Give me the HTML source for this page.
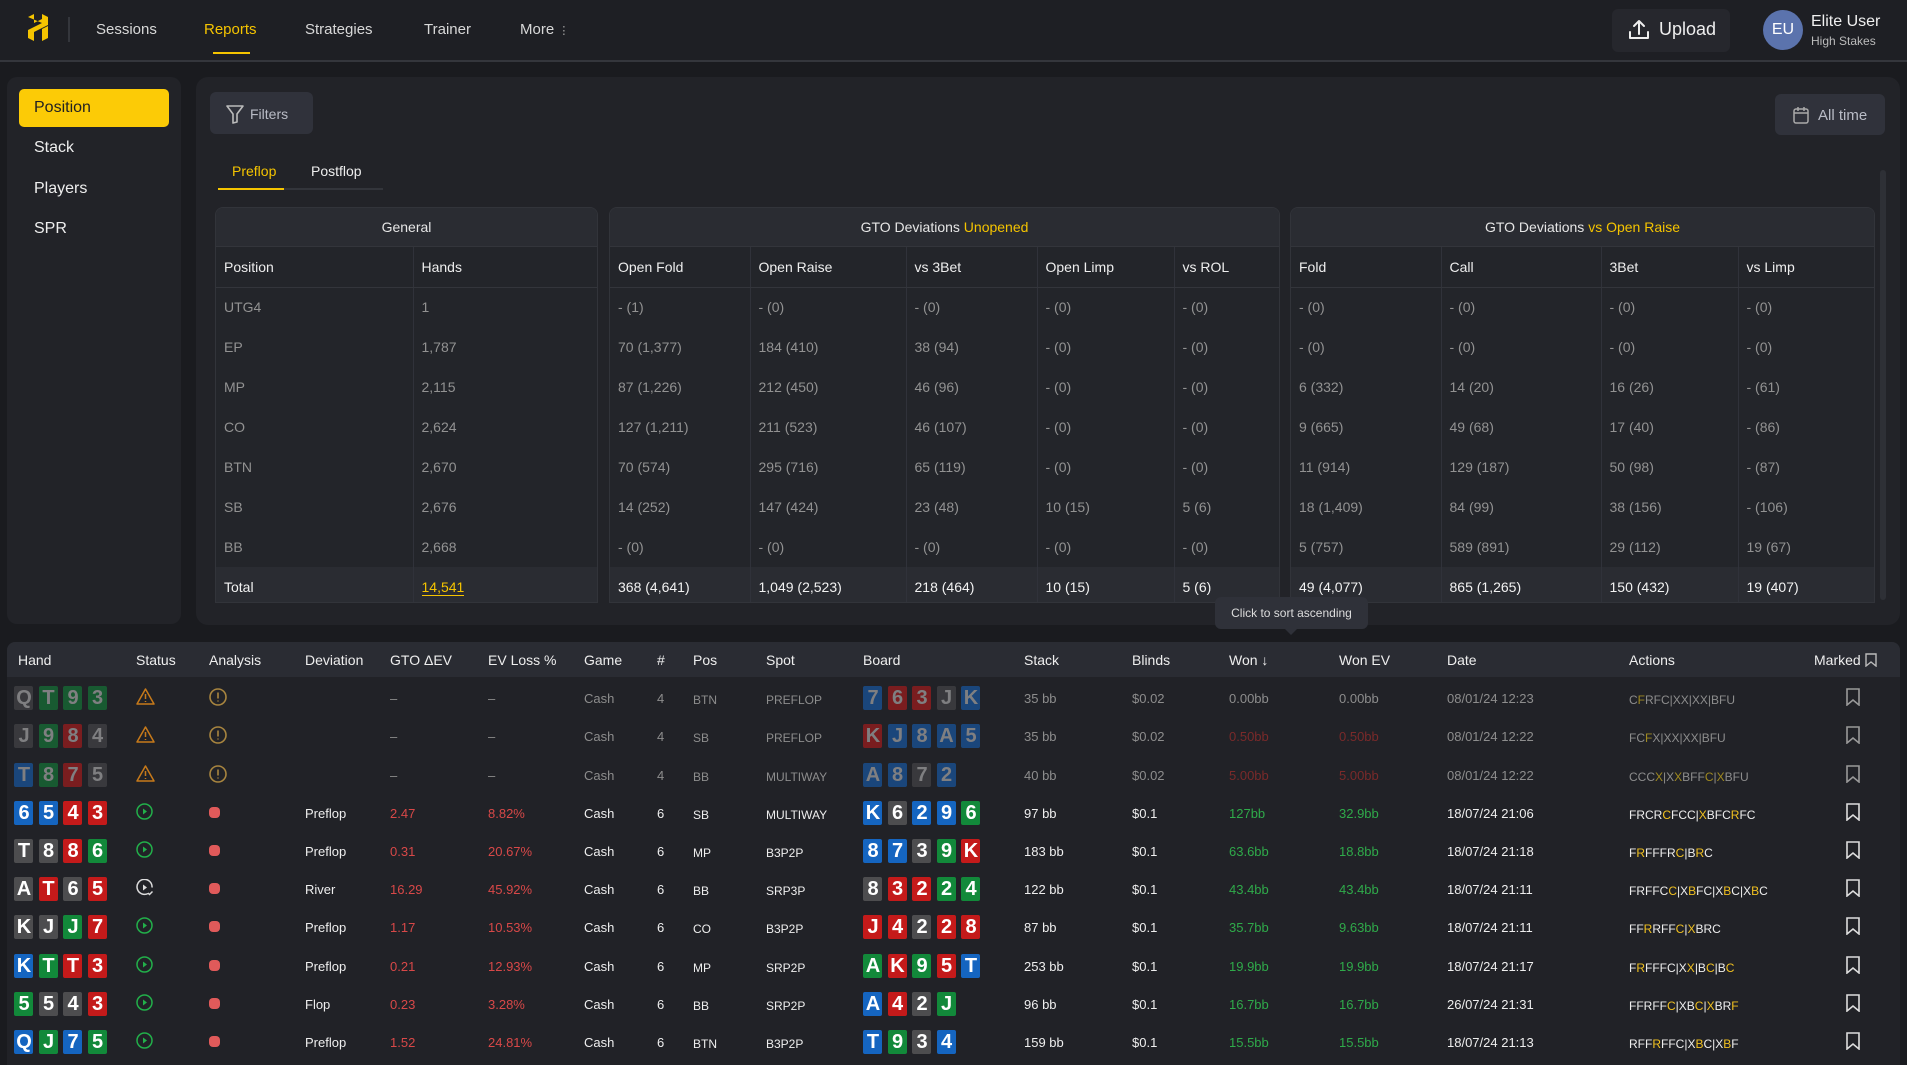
<!DOCTYPE html>
<html><head><meta charset="utf-8">
<style>
*{box-sizing:border-box;margin:0;padding:0}
body{width:1907px;height:1065px;overflow:hidden;background:#1a1b1f;font-family:"Liberation Sans",sans-serif;color:#ddd;position:relative}
.abs{position:absolute}
#hdr{left:0;top:0;width:1907px;height:62px;background:#1e1f24;border-bottom:2px solid #34363c}
.nav{position:absolute;top:21px;font-size:15px;color:#d8d8d8}
#side{left:7px;top:77px;width:174px;height:547px;background:#222328;border-radius:10px}
.si{position:absolute;left:27px;font-size:16px;color:#eee}
#main{left:196px;top:77px;width:1704px;height:548px;background:#222328;border-radius:12px}
.btn{position:absolute;background:#30323b;border-radius:6px;color:#b9bcc6;font-size:15px}
.grp{position:absolute;top:207px;height:396px;background:#23252a;border:1px solid #32343a;border-radius:8px 8px 0 0;overflow:hidden}
.gh{height:39px;background:#2a2c32;text-align:center;font-size:14px;line-height:39px;color:#e6e6e6;border-bottom:1px solid #33353b}
.gt{border-collapse:collapse;table-layout:fixed}
.gt td{height:40px;padding-left:8px;font-size:14px;color:#929292;border-right:1px solid #30323a;white-space:nowrap}
.gt tr.h td{color:#eee;border-bottom:1px solid #33353b;height:40px}
.gt tr.t td{background:#2a2c32;color:#f2f2f2}
.gt td:last-child{border-right:none}
.y{color:#f5c400}
#bt{left:7px;top:642px;width:1893px;height:423px;background:#212227;border-radius:8px 8px 0 0}
.row{position:absolute;left:0;width:1893px;display:flex;align-items:center;font-size:13px;color:#eee;white-space:nowrap}
.row>div{flex:none}
.hr{top:0;height:35px;background:#2a2c33;border-radius:8px 8px 0 0;font-size:14px;padding-left:11px}
.c{display:inline-block;width:19px;height:24px;border-radius:2px;font:bold 20px/24px "Liberation Sans",sans-serif;color:#fff;text-align:center;margin-right:5.5px;vertical-align:middle;overflow:hidden}
.c{letter-spacing:-1px}
.b{background:#1565c0}.r{background:#c41a1a}.g{background:#12893a}.k{background:#4d4d4f}
.dim .c{opacity:.55;color:#ccc}
.dim{color:#8d8d8d}
.red{color:#d84848}.grn{color:#2faa4a}.dred{color:#7a2a2a}
.sm{font-size:12px;padding-top:4px}
.dot{width:11px;height:11px;border-radius:4px;background:#e05a5a;display:inline-block}
.ac span{color:#f0c020}
.dim .ac span{color:#a08a20}
.bm{margin-left:32px}
</style></head><body>

<div id="hdr" class="abs">
  <svg class="abs" style="left:27px;top:14px" width="22" height="27" viewBox="0 0 22 27"><path d="M1 3 L7 0 L7 9 L15 5 L15 0 L21 3 L21 11 L7 18 L7 27 L1 24 L1 16 L15 9 Z" fill="#f5c400"/><path d="M15 15 L21 12 L21 24 L15 27 Z" fill="#f5c400"/></svg>
  <div class="abs" style="left:68px;top:17px;width:2px;height:25px;background:#34363c"></div>
  <div class="nav" style="left:96px">Sessions</div>
  <div class="nav" style="left:204px;color:#f5c400">Reports</div>
  <div class="abs" style="left:213px;top:52px;width:37px;height:2px;background:#f5c400"></div>
  <div class="nav" style="left:305px">Strategies</div>
  <div class="nav" style="left:424px">Trainer</div>
  <div class="nav" style="left:520px">More <span style="font-size:11px;color:#aaa">&#8942;</span></div>
  <div class="abs" style="left:1612px;top:9px;width:118px;height:43px;background:#26272d;border-radius:6px"></div>
  <svg class="abs" style="left:1628px;top:19px" width="22" height="22" viewBox="0 0 22 22" fill="none" stroke="#eee" stroke-width="2" stroke-linecap="round" stroke-linejoin="round"><path d="M2 13v6h18v-6"/><path d="M11 15V2M6 7l5-5 5 5"/></svg>
  <div class="abs" style="left:1659px;top:19px;font-size:18px;color:#eee">Upload</div>
  <div class="abs" style="left:1763px;top:10px;width:40px;height:40px;border-radius:50%;background:#5b73ad;color:#fff;font-size:16px;line-height:40px;text-align:center">EU</div>
  <div class="abs" style="left:1811px;top:13px;font-size:16px;color:#f0f0f0">Elite User</div>
  <div class="abs" style="left:1811px;top:34px;font-size:12px;color:#bbb">High Stakes</div>
</div>

<div id="side" class="abs">
  <div class="abs" style="left:12px;top:12px;width:150px;height:38px;background:#fccb06;border-radius:5px"></div>
  <div class="si" style="top:22px;color:#222">Position</div>
  <div class="si" style="top:62px">Stack</div>
  <div class="si" style="top:103px">Players</div>
  <div class="si" style="top:143px">SPR</div>
</div>

<div id="main" class="abs">
  <div class="btn" style="left:14px;top:15px;width:103px;height:42px"></div>
  <svg class="abs" style="left:30px;top:28px" width="18" height="19" viewBox="0 0 18 19" fill="none" stroke="#bbb" stroke-width="1.6" stroke-linejoin="round"><path d="M1 1h16l-6 8v8l-4 1V9z"/></svg>
  <div class="abs" style="left:54px;top:29px;font-size:14px;color:#b9bcc6">Filters</div>
  <div class="btn" style="left:1579px;top:17px;width:110px;height:41px"></div>
  <svg class="abs" style="left:1597px;top:29px" width="16" height="18" viewBox="0 0 16 18" fill="none" stroke="#aaa" stroke-width="1.5"><rect x="1" y="3" width="14" height="14" rx="2"/><path d="M1 7h14M5 1v4M11 1v4"/></svg>
  <div class="abs" style="left:1622px;top:30px;font-size:15px;color:#b9bcc6">All time</div>
  <div class="abs" style="left:22px;top:111px;width:165px;height:2px;background:#33353b"></div>
  <div class="abs" style="left:22px;top:111px;width:66px;height:2px;background:#f5c400"></div>
  <div class="abs" style="left:36px;top:86px;font-size:14px;color:#f5c400">Preflop</div>
  <div class="abs" style="left:115px;top:86px;font-size:14px;color:#eee">Postflop</div>
  <div class="abs" style="left:1684px;top:93px;width:6px;height:430px;background:#2e3036;border-radius:3px"></div>
</div>

<div class="grp" style="left:215px;width:383px">
  <div class="gh">General</div>
  <table class="gt" style="width:381px"><colgroup><col style="width:197px"><col style="width:184px"></colgroup>
  <tr class="h"><td>Position</td><td>Hands</td></tr>
  <tr><td>UTG4</td><td>1</td></tr>
  <tr><td>EP</td><td>1,787</td></tr>
  <tr><td>MP</td><td>2,115</td></tr>
  <tr><td>CO</td><td>2,624</td></tr>
  <tr><td>BTN</td><td>2,670</td></tr>
  <tr><td>SB</td><td>2,676</td></tr>
  <tr><td>BB</td><td>2,668</td></tr>
  <tr class="t"><td>Total</td><td><span class="y" style="border-bottom:1px solid #f5c400">14,541</span></td></tr>
  </table>
</div>
<div class="grp" style="left:609px;width:671px">
  <div class="gh">GTO Deviations <span class="y">Unopened</span></div>
  <table class="gt" style="width:669px"><colgroup><col style="width:140px"><col style="width:156px"><col style="width:131px"><col style="width:137px"><col style="width:105px"></colgroup>
  <tr class="h"><td>Open Fold</td><td>Open Raise</td><td>vs 3Bet</td><td>Open Limp</td><td>vs ROL</td></tr>
  <tr><td>- (1)</td><td>- (0)</td><td>- (0)</td><td>- (0)</td><td>- (0)</td></tr>
  <tr><td>70 (1,377)</td><td>184 (410)</td><td>38 (94)</td><td>- (0)</td><td>- (0)</td></tr>
  <tr><td>87 (1,226)</td><td>212 (450)</td><td>46 (96)</td><td>- (0)</td><td>- (0)</td></tr>
  <tr><td>127 (1,211)</td><td>211 (523)</td><td>46 (107)</td><td>- (0)</td><td>- (0)</td></tr>
  <tr><td>70 (574)</td><td>295 (716)</td><td>65 (119)</td><td>- (0)</td><td>- (0)</td></tr>
  <tr><td>14 (252)</td><td>147 (424)</td><td>23 (48)</td><td>10 (15)</td><td>5 (6)</td></tr>
  <tr><td>- (0)</td><td>- (0)</td><td>- (0)</td><td>- (0)</td><td>- (0)</td></tr>
  <tr class="t"><td>368 (4,641)</td><td>1,049 (2,523)</td><td>218 (464)</td><td>10 (15)</td><td>5 (6)</td></tr>
  </table>
</div>
<div class="grp" style="left:1290px;width:585px">
  <div class="gh">GTO Deviations <span class="y">vs Open Raise</span></div>
  <table class="gt" style="width:583px"><colgroup><col style="width:150px"><col style="width:160px"><col style="width:137px"><col style="width:136px"></colgroup>
  <tr class="h"><td>Fold</td><td>Call</td><td>3Bet</td><td>vs Limp</td></tr>
  <tr><td>- (0)</td><td>- (0)</td><td>- (0)</td><td>- (0)</td></tr>
  <tr><td>- (0)</td><td>- (0)</td><td>- (0)</td><td>- (0)</td></tr>
  <tr><td>6 (332)</td><td>14 (20)</td><td>16 (26)</td><td>- (61)</td></tr>
  <tr><td>9 (665)</td><td>49 (68)</td><td>17 (40)</td><td>- (86)</td></tr>
  <tr><td>11 (914)</td><td>129 (187)</td><td>50 (98)</td><td>- (87)</td></tr>
  <tr><td>18 (1,409)</td><td>84 (99)</td><td>38 (156)</td><td>- (106)</td></tr>
  <tr><td>5 (757)</td><td>589 (891)</td><td>29 (112)</td><td>19 (67)</td></tr>
  <tr class="t"><td>49 (4,077)</td><td>865 (1,265)</td><td>150 (432)</td><td>19 (407)</td></tr>
  </table>
</div>

<div id="bt" class="abs">
  <div class="row hr">
    <div style="width:118px">Hand</div><div style="width:73px">Status</div><div style="width:96px">Analysis</div><div style="width:85px">Deviation</div><div style="width:98px">GTO ΔEV</div><div style="width:96px">EV Loss %</div><div style="width:73px">Game</div><div style="width:36px">#</div><div style="width:73px">Pos</div><div style="width:97px">Spot</div><div style="width:161px">Board</div><div style="width:108px">Stack</div><div style="width:97px">Blinds</div><div style="width:110px">Won &#8595;</div><div style="width:108px">Won EV</div><div style="width:182px">Date</div><div style="width:185px">Actions</div><div>Marked <svg width="12" height="14" viewBox="0 0 12 14" fill="none" stroke="#bbb" stroke-width="1.4" style="vertical-align:-2px"><path d="M1 1h10v12l-5-4-5 4z"/></svg></div>
  </div>
</div>

<div id="rows" class="abs" style="left:7px;top:679px">
<div class="row dim" style="top:0;height:38px;padding-left:7px">
<div style="width:122px"><span class="c k">Q</span><span class="c g">T</span><span class="c g">9</span><span class="c g">3</span></div>
<div style="width:73px"><svg width="19" height="17" viewBox="0 0 19 17" fill="none" stroke="#c77a1a" stroke-width="1.5" stroke-linejoin="round"><path d="M9.5 1L18 16H1z"/><path d="M9.5 6v5M9.5 13v1"/></svg></div>
<div style="width:96px"><svg width="18" height="18" viewBox="0 0 18 18" fill="none" stroke="#a8853f" stroke-width="1.6"><circle cx="9" cy="9" r="8"/><path d="M9 4.5v6M9 12.5v1"/></svg></div>
<div style="width:85px"></div><div style="width:98px">–</div><div style="width:96px">–</div><div style="width:73px">Cash</div><div style="width:36px">4</div><div style="width:73px" class="sm">BTN</div><div style="width:97px" class="sm">PREFLOP</div>
<div style="width:161px"><span class="c b">7</span><span class="c r">6</span><span class="c r">3</span><span class="c k">J</span><span class="c b">K</span></div>
<div style="width:108px">35 bb</div><div style="width:97px">$0.02</div><div style="width:110px">0.00bb</div><div style="width:108px">0.00bb</div><div style="width:182px">08/01/24 12:23</div><div style="width:185px" class="ac sm">C<span>F</span>RFC|XX|XX|BFU</div>
<div class="bm"><svg width="14" height="18" viewBox="0 0 14 18" fill="none" stroke="#999" stroke-width="1.6"><path d="M1 1h12v16l-6-5-6 5z"/></svg></div>
</div>

<div class="row dim" style="top:38px;height:38px;padding-left:7px">
<div style="width:122px"><span class="c k">J</span><span class="c g">9</span><span class="c r">8</span><span class="c k">4</span></div>
<div style="width:73px"><svg width="19" height="17" viewBox="0 0 19 17" fill="none" stroke="#c77a1a" stroke-width="1.5" stroke-linejoin="round"><path d="M9.5 1L18 16H1z"/><path d="M9.5 6v5M9.5 13v1"/></svg></div>
<div style="width:96px"><svg width="18" height="18" viewBox="0 0 18 18" fill="none" stroke="#a8853f" stroke-width="1.6"><circle cx="9" cy="9" r="8"/><path d="M9 4.5v6M9 12.5v1"/></svg></div>
<div style="width:85px"></div><div style="width:98px">–</div><div style="width:96px">–</div><div style="width:73px">Cash</div><div style="width:36px">4</div><div style="width:73px" class="sm">SB</div><div style="width:97px" class="sm">PREFLOP</div>
<div style="width:161px"><span class="c r">K</span><span class="c b">J</span><span class="c b">8</span><span class="c b">A</span><span class="c b">5</span></div>
<div style="width:108px">35 bb</div><div style="width:97px">$0.02</div><div style="width:110px" class="dred">0.50bb</div><div style="width:108px" class="dred">0.50bb</div><div style="width:182px">08/01/24 12:22</div><div style="width:185px" class="ac sm">FC<span>F</span>X|XX|XX|BFU</div>
<div class="bm"><svg width="14" height="18" viewBox="0 0 14 18" fill="none" stroke="#999" stroke-width="1.6"><path d="M1 1h12v16l-6-5-6 5z"/></svg></div>
</div>

<div class="row dim" style="top:77px;height:38px;padding-left:7px">
<div style="width:122px"><span class="c b">T</span><span class="c g">8</span><span class="c r">7</span><span class="c k">5</span></div>
<div style="width:73px"><svg width="19" height="17" viewBox="0 0 19 17" fill="none" stroke="#c77a1a" stroke-width="1.5" stroke-linejoin="round"><path d="M9.5 1L18 16H1z"/><path d="M9.5 6v5M9.5 13v1"/></svg></div>
<div style="width:96px"><svg width="18" height="18" viewBox="0 0 18 18" fill="none" stroke="#a8853f" stroke-width="1.6"><circle cx="9" cy="9" r="8"/><path d="M9 4.5v6M9 12.5v1"/></svg></div>
<div style="width:85px"></div><div style="width:98px">–</div><div style="width:96px">–</div><div style="width:73px">Cash</div><div style="width:36px">4</div><div style="width:73px" class="sm">BB</div><div style="width:97px" class="sm">MULTIWAY</div>
<div style="width:161px"><span class="c b">A</span><span class="c b">8</span><span class="c k">7</span><span class="c b">2</span></div>
<div style="width:108px">40 bb</div><div style="width:97px">$0.02</div><div style="width:110px" class="dred">5.00bb</div><div style="width:108px" class="dred">5.00bb</div><div style="width:182px">08/01/24 12:22</div><div style="width:185px" class="ac sm">CCC<span>X</span>|X<span>X</span>BFF<span>C</span>|<span>X</span>BFU</div>
<div class="bm"><svg width="14" height="18" viewBox="0 0 14 18" fill="none" stroke="#999" stroke-width="1.6"><path d="M1 1h12v16l-6-5-6 5z"/></svg></div>
</div>

<div class="row" style="top:115px;height:38px;padding-left:7px">
<div style="width:122px"><span class="c b">6</span><span class="c b">5</span><span class="c r">4</span><span class="c r">3</span></div>
<div style="width:73px"><svg width="17" height="17" viewBox="0 0 17 17"><circle cx="8.5" cy="8.5" r="7.5" fill="none" stroke="#22b04a" stroke-width="1.5"/><path d="M7 5.5l4 3-4 3z" fill="#22b04a"/></svg></div>
<div style="width:96px"><span class="dot"></span></div>
<div style="width:85px">Preflop</div><div style="width:98px" class="red">2.47</div><div style="width:96px" class="red">8.82%</div><div style="width:73px">Cash</div><div style="width:36px">6</div><div style="width:73px" class="sm">SB</div><div style="width:97px" class="sm">MULTIWAY</div>
<div style="width:161px"><span class="c b">K</span><span class="c k">6</span><span class="c b">2</span><span class="c b">9</span><span class="c g">6</span></div>
<div style="width:108px">97 bb</div><div style="width:97px">$0.1</div><div style="width:110px" class="grn">127bb</div><div style="width:108px" class="grn">32.9bb</div><div style="width:182px">18/07/24 21:06</div><div style="width:185px" class="ac sm">FRCR<span>C</span>FCC|<span>X</span>BFC<span>R</span>FC</div>
<div class="bm"><svg width="14" height="18" viewBox="0 0 14 18" fill="none" stroke="#ddd" stroke-width="1.6"><path d="M1 1h12v16l-6-5-6 5z"/></svg></div>
</div>

<div class="row" style="top:153px;height:38px;padding-left:7px">
<div style="width:122px"><span class="c k">T</span><span class="c k">8</span><span class="c r">8</span><span class="c g">6</span></div>
<div style="width:73px"><svg width="17" height="17" viewBox="0 0 17 17"><circle cx="8.5" cy="8.5" r="7.5" fill="none" stroke="#22b04a" stroke-width="1.5"/><path d="M7 5.5l4 3-4 3z" fill="#22b04a"/></svg></div>
<div style="width:96px"><span class="dot"></span></div>
<div style="width:85px">Preflop</div><div style="width:98px" class="red">0.31</div><div style="width:96px" class="red">20.67%</div><div style="width:73px">Cash</div><div style="width:36px">6</div><div style="width:73px" class="sm">MP</div><div style="width:97px" class="sm">B3P2P</div>
<div style="width:161px"><span class="c b">8</span><span class="c b">7</span><span class="c k">3</span><span class="c g">9</span><span class="c r">K</span></div>
<div style="width:108px">183 bb</div><div style="width:97px">$0.1</div><div style="width:110px" class="grn">63.6bb</div><div style="width:108px" class="grn">18.8bb</div><div style="width:182px">18/07/24 21:18</div><div style="width:185px" class="ac sm">F<span>R</span>FFFR<span>C</span>|B<span>R</span>C</div>
<div class="bm"><svg width="14" height="18" viewBox="0 0 14 18" fill="none" stroke="#ddd" stroke-width="1.6"><path d="M1 1h12v16l-6-5-6 5z"/></svg></div>
</div>

<div class="row" style="top:191px;height:38px;padding-left:7px">
<div style="width:122px"><span class="c k">A</span><span class="c r">T</span><span class="c k">6</span><span class="c r">5</span></div>
<div style="width:73px"><svg width="17" height="17" viewBox="0 0 17 17" fill="none" stroke="#ddd" stroke-width="1.5"><path d="M12 14.5A7.5 7.5 0 1 1 16 8.5"/><path d="M7 5.5l4 3-4 3z" fill="#ddd" stroke="none"/><path d="M12 14l1.5 1.5 3-3"/></svg></div>
<div style="width:96px"><span class="dot"></span></div>
<div style="width:85px">River</div><div style="width:98px" class="red">16.29</div><div style="width:96px" class="red">45.92%</div><div style="width:73px">Cash</div><div style="width:36px">6</div><div style="width:73px" class="sm">BB</div><div style="width:97px" class="sm">SRP3P</div>
<div style="width:161px"><span class="c k">8</span><span class="c r">3</span><span class="c r">2</span><span class="c g">2</span><span class="c g">4</span></div>
<div style="width:108px">122 bb</div><div style="width:97px">$0.1</div><div style="width:110px" class="grn">43.4bb</div><div style="width:108px" class="grn">43.4bb</div><div style="width:182px">18/07/24 21:11</div><div style="width:185px" class="ac sm">FRFFC<span>C</span>|X<span>B</span>FC|X<span>B</span>C|X<span>B</span>C</div>
<div class="bm"><svg width="14" height="18" viewBox="0 0 14 18" fill="none" stroke="#ddd" stroke-width="1.6"><path d="M1 1h12v16l-6-5-6 5z"/></svg></div>
</div>

<div class="row" style="top:229px;height:38px;padding-left:7px">
<div style="width:122px"><span class="c k">K</span><span class="c k">J</span><span class="c g">J</span><span class="c r">7</span></div>
<div style="width:73px"><svg width="17" height="17" viewBox="0 0 17 17"><circle cx="8.5" cy="8.5" r="7.5" fill="none" stroke="#22b04a" stroke-width="1.5"/><path d="M7 5.5l4 3-4 3z" fill="#22b04a"/></svg></div>
<div style="width:96px"><span class="dot"></span></div>
<div style="width:85px">Preflop</div><div style="width:98px" class="red">1.17</div><div style="width:96px" class="red">10.53%</div><div style="width:73px">Cash</div><div style="width:36px">6</div><div style="width:73px" class="sm">CO</div><div style="width:97px" class="sm">B3P2P</div>
<div style="width:161px"><span class="c r">J</span><span class="c r">4</span><span class="c k">2</span><span class="c r">2</span><span class="c r">8</span></div>
<div style="width:108px">87 bb</div><div style="width:97px">$0.1</div><div style="width:110px" class="grn">35.7bb</div><div style="width:108px" class="grn">9.63bb</div><div style="width:182px">18/07/24 21:11</div><div style="width:185px" class="ac sm">FF<span>R</span>RFF<span>C</span>|<span>X</span>BRC</div>
<div class="bm"><svg width="14" height="18" viewBox="0 0 14 18" fill="none" stroke="#ddd" stroke-width="1.6"><path d="M1 1h12v16l-6-5-6 5z"/></svg></div>
</div>

<div class="row" style="top:268px;height:38px;padding-left:7px">
<div style="width:122px"><span class="c b">K</span><span class="c g">T</span><span class="c r">T</span><span class="c r">3</span></div>
<div style="width:73px"><svg width="17" height="17" viewBox="0 0 17 17"><circle cx="8.5" cy="8.5" r="7.5" fill="none" stroke="#22b04a" stroke-width="1.5"/><path d="M7 5.5l4 3-4 3z" fill="#22b04a"/></svg></div>
<div style="width:96px"><span class="dot"></span></div>
<div style="width:85px">Preflop</div><div style="width:98px" class="red">0.21</div><div style="width:96px" class="red">12.93%</div><div style="width:73px">Cash</div><div style="width:36px">6</div><div style="width:73px" class="sm">MP</div><div style="width:97px" class="sm">SRP2P</div>
<div style="width:161px"><span class="c g">A</span><span class="c r">K</span><span class="c g">9</span><span class="c r">5</span><span class="c b">T</span></div>
<div style="width:108px">253 bb</div><div style="width:97px">$0.1</div><div style="width:110px" class="grn">19.9bb</div><div style="width:108px" class="grn">19.9bb</div><div style="width:182px">18/07/24 21:17</div><div style="width:185px" class="ac sm">F<span>R</span>FFFC|X<span>X</span>|B<span>C</span>|B<span>C</span></div>
<div class="bm"><svg width="14" height="18" viewBox="0 0 14 18" fill="none" stroke="#ddd" stroke-width="1.6"><path d="M1 1h12v16l-6-5-6 5z"/></svg></div>
</div>

<div class="row" style="top:306px;height:38px;padding-left:7px">
<div style="width:122px"><span class="c g">5</span><span class="c k">5</span><span class="c k">4</span><span class="c r">3</span></div>
<div style="width:73px"><svg width="17" height="17" viewBox="0 0 17 17"><circle cx="8.5" cy="8.5" r="7.5" fill="none" stroke="#22b04a" stroke-width="1.5"/><path d="M7 5.5l4 3-4 3z" fill="#22b04a"/></svg></div>
<div style="width:96px"><span class="dot"></span></div>
<div style="width:85px">Flop</div><div style="width:98px" class="red">0.23</div><div style="width:96px" class="red">3.28%</div><div style="width:73px">Cash</div><div style="width:36px">6</div><div style="width:73px" class="sm">BB</div><div style="width:97px" class="sm">SRP2P</div>
<div style="width:161px"><span class="c b">A</span><span class="c r">4</span><span class="c k">2</span><span class="c g">J</span></div>
<div style="width:108px">96 bb</div><div style="width:97px">$0.1</div><div style="width:110px" class="grn">16.7bb</div><div style="width:108px" class="grn">16.7bb</div><div style="width:182px">26/07/24 21:31</div><div style="width:185px" class="ac sm">FFRFF<span>C</span>|XB<span>C</span>|<span>X</span>BR<span>F</span></div>
<div class="bm"><svg width="14" height="18" viewBox="0 0 14 18" fill="none" stroke="#ddd" stroke-width="1.6"><path d="M1 1h12v16l-6-5-6 5z"/></svg></div>
</div>

<div class="row" style="top:344px;height:38px;padding-left:7px">
<div style="width:122px"><span class="c b">Q</span><span class="c g">J</span><span class="c b">7</span><span class="c g">5</span></div>
<div style="width:73px"><svg width="17" height="17" viewBox="0 0 17 17"><circle cx="8.5" cy="8.5" r="7.5" fill="none" stroke="#22b04a" stroke-width="1.5"/><path d="M7 5.5l4 3-4 3z" fill="#22b04a"/></svg></div>
<div style="width:96px"><span class="dot"></span></div>
<div style="width:85px">Preflop</div><div style="width:98px" class="red">1.52</div><div style="width:96px" class="red">24.81%</div><div style="width:73px">Cash</div><div style="width:36px">6</div><div style="width:73px" class="sm">BTN</div><div style="width:97px" class="sm">B3P2P</div>
<div style="width:161px"><span class="c b">T</span><span class="c g">9</span><span class="c k">3</span><span class="c b">4</span></div>
<div style="width:108px">159 bb</div><div style="width:97px">$0.1</div><div style="width:110px" class="grn">15.5bb</div><div style="width:108px" class="grn">15.5bb</div><div style="width:182px">18/07/24 21:13</div><div style="width:185px" class="ac sm">RFF<span>R</span>FFC|X<span>B</span>C|X<span>B</span>F</div>
<div class="bm"><svg width="14" height="18" viewBox="0 0 14 18" fill="none" stroke="#ddd" stroke-width="1.6"><path d="M1 1h12v16l-6-5-6 5z"/></svg></div>
</div>
</div>

<div class="abs" style="left:1215px;top:597px;width:153px;height:32px;background:#2f3139;border-radius:6px;color:#ddd;font-size:12px;line-height:32px;text-align:center">Click to sort ascending</div>
<div class="abs" style="left:1285px;top:629px;width:0;height:0;border-left:6px solid transparent;border-right:6px solid transparent;border-top:6px solid #2f3139"></div>

</body></html>
